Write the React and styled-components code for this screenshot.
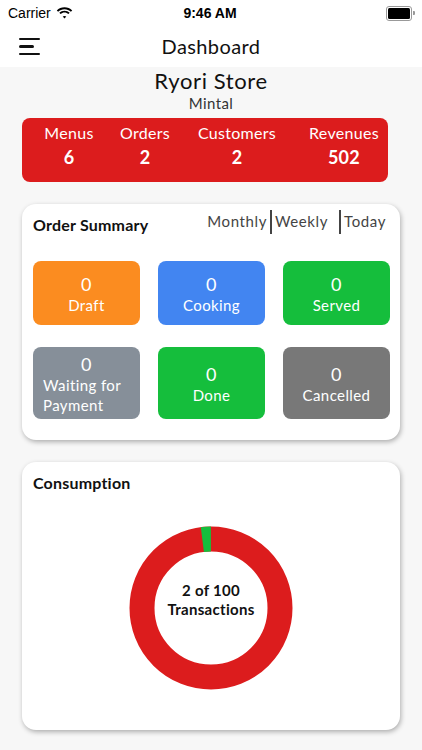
import React from 'react';
import styled, { createGlobalStyle } from 'styled-components';

const GlobalStyle = createGlobalStyle`
  body {
    margin: 0;
    background: #f7f7f7;
    font-family: 'Lato', 'Noto Sans', sans-serif;
    color: #111;
  }
`;

const Screen = styled.div`
  width: 422px;
  height: 750px;
  overflow: hidden;
  background: #f7f7f7;
`;

const TopArea = styled.div`
  background: #ffffff;
`;

const StatusBar = styled.div`
  height: 26px;
  padding: 0 10px 0 8px;
  display: grid;
  grid-template-columns: 1fr auto 1fr;
  align-items: center;
  font-family: 'Liberation Sans', sans-serif;
  font-size: 14px;
  color: #000;
`;

const Carrier = styled.div`
  display: flex;
  align-items: center;
  gap: 5px;
`;

const Time = styled.div`
  font-weight: 700;
  font-size: 14px;
`;

const Battery = styled.div`
  justify-self: end;
  width: 22px;
  height: 11px;
  border: 1px solid #999;
  border-radius: 3px;
  padding: 1px;
  position: relative;
  &::before {
    content: '';
    display: block;
    height: 100%;
    background: #000;
    border-radius: 1.5px;
  }
  &::after {
    content: '';
    position: absolute;
    right: -4px;
    top: 4px;
    width: 2px;
    height: 4px;
    background: #999;
    border-radius: 0 1px 1px 0;
  }
`;

const NavBar = styled.div`
  height: 41px;
  display: grid;
  grid-template-columns: 60px 1fr 60px;
  align-items: center;
`;

const MenuButton = styled.div`
  padding-left: 19px;
  width: 21px;
  display: flex;
  flex-direction: column;
  gap: 5px;
`;

const MenuLine = styled.span`
  display: block;
  width: ${(p) => p.$width}px;
  height: 2.5px;
  background: #111;
  border-radius: 2px;
`;

const NavTitle = styled.div`
  text-align: center;
  font-size: 20px;
  letter-spacing: 0.4px;
  margin-top: -2px;
`;

const Content = styled.div`
  padding: 2px 22px 0 22px;
`;

const StoreName = styled.div`
  text-align: center;
  font-size: 22px;
  line-height: 26px;
  letter-spacing: 0.6px;
  margin-top: -1px;
`;

const StoreArea = styled.div`
  text-align: center;
  font-size: 15px;
  line-height: 18px;
  color: #333;
  letter-spacing: 0.4px;
`;

const StatsCard = styled.div`
  margin-top: 6px;
  width: 366px;
  height: 64px;
  box-sizing: border-box;
  background: #dc1c1d;
  border-radius: 8px;
  display: grid;
  grid-template-columns: 94px 58px 126px 88px;
  padding-top: 4px;
  color: #fff;
`;

const Stat = styled.div`
  text-align: center;
  display: flex;
  flex-direction: column;
  gap: 2px;
  letter-spacing: 0.3px;
`;

const StatLabel = styled.div`
  font-size: 16px;
  line-height: 22px;
`;

const StatValue = styled.div`
  font-size: 18px;
  font-weight: 700;
  line-height: 22px;
`;

const Card = styled.div`
  margin-top: ${(p) => p.$top}px;
  width: 378px;
  height: ${(p) => p.$height}px;
  box-sizing: border-box;
  background: #fff;
  border-radius: 14px;
  box-shadow: 1px 2px 5px rgba(0, 0, 0, 0.3);
  padding: 9px 11px;
`;

const CardHeader = styled.div`
  display: flex;
  justify-content: space-between;
  align-items: flex-start;
`;

const CardTitle = styled.div`
  font-size: 16px;
  font-weight: 700;
  line-height: 18px;
  margin-top: 3px;
  letter-spacing: 0.2px;
`;

const Tabs = styled.div`
  display: flex;
  align-items: flex-start;
  margin-top: -3px;
`;

const Tab = styled.div`
  font-size: 15px;
  line-height: 18px;
  color: #444;
  letter-spacing: 0.6px;
  padding: 2px 3px 0;
  border-left: ${(p) => (p.$divided ? '2px solid #444' : 'none')};
  height: 24px;
  box-sizing: border-box;
  margin-left: ${(p) => p.$gap || 0}px;
`;

const TileGrid = styled.div`
  margin-top: 27px;
  display: grid;
  grid-template-columns: repeat(3, 107px);
  grid-template-rows: 64px 72px;
  column-gap: 18px;
  row-gap: 22px;
`;

const Tile = styled.div`
  background: ${(p) => p.$color};
  border-radius: 8px;
  color: #fff;
  display: flex;
  flex-direction: column;
  justify-content: center;
  align-items: ${(p) => (p.$left ? 'flex-start' : 'center')};
  padding: 2px 10px 0;
  font-size: 15px;
  line-height: 20px;
  letter-spacing: 0.4px;
`;

const TileCount = styled.div`
  font-size: 18px;
  line-height: 22px;
  align-self: center;
`;

const TileLabel = styled.div`
  text-align: ${(p) => (p.$left ? 'left' : 'center')};
`;

const ChartWrap = styled.div`
  display: flex;
  justify-content: center;
  margin-top: 34px;
`;

const Donut = styled.div`
  position: relative;
  width: 164px;
  height: 164px;
`;

const DonutLabel = styled.div`
  position: absolute;
  inset: 0 0 16px 0;
  display: flex;
  flex-direction: column;
  align-items: center;
  justify-content: center;
  font-size: 15px;
  font-weight: 700;
  line-height: 19px;
  letter-spacing: 0.3px;
`;

const tiles = [
  { count: 0, label: 'Draft', color: '#fb8c20' },
  { count: 0, label: 'Cooking', color: '#4285f1' },
  { count: 0, label: 'Served', color: '#15be3c' },
  { count: 0, label: 'Waiting for Payment', color: '#868f99', left: true },
  { count: 0, label: 'Done', color: '#15be3c' },
  { count: 0, label: 'Cancelled', color: '#787878' },
];

const stats = [
  { label: 'Menus', value: 6 },
  { label: 'Orders', value: 2 },
  { label: 'Customers', value: 2 },
  { label: 'Revenues', value: 502 },
];

function Wifi() {
  return (
    <svg width="17" height="12" viewBox="0 0 17 12">
      <path d="M8.5 2.2c2.5 0 4.7 1 6.4 2.6l1.3-1.4C14.2 1.5 11.5.3 8.5.3S2.8 1.5.8 3.4l1.3 1.4C3.8 3.2 6 2.2 8.5 2.2z" fill="#000" />
      <path d="M8.5 5.6c1.5 0 2.8.6 3.9 1.5l1.3-1.4C12.3 4.5 10.5 3.7 8.5 3.7S4.7 4.5 3.3 5.7l1.3 1.4c1.1-.9 2.4-1.5 3.9-1.5z" fill="#000" />
      <path d="M8.5 8.9c.7 0 1.3.3 1.8.7L8.5 11.6 6.7 9.6c.5-.4 1.1-.7 1.8-.7z" fill="#000" />
    </svg>
  );
}

function Ring({ used, total }) {
  const r = 69;
  const c = 2 * Math.PI * r;
  const part = (used / total) * c;
  return (
    <svg width="164" height="164" viewBox="0 0 164 164">
      <circle cx="82" cy="82" r={r} fill="none" stroke="#dc1c1d" strokeWidth="25" />
      <circle
        cx="82"
        cy="82"
        r={r}
        fill="none"
        stroke="#15be3c"
        strokeWidth="25"
        strokeDasharray={`${part} ${c - part}`}
        transform="rotate(-97.2 82 82)"
      />
    </svg>
  );
}

export default function App() {
  return (
    <Screen>
      <GlobalStyle />
      <TopArea>
        <StatusBar>
          <Carrier>
            Carrier <Wifi />
          </Carrier>
          <Time>9:46 AM</Time>
          <Battery />
        </StatusBar>
        <NavBar>
          <MenuButton>
            <MenuLine $width={21} />
            <MenuLine $width={15} />
            <MenuLine $width={21} />
          </MenuButton>
          <NavTitle>Dashboard</NavTitle>
          <div />
        </NavBar>
      </TopArea>
      <Content>
        <StoreName>Ryori Store</StoreName>
        <StoreArea>Mintal</StoreArea>
        <StatsCard>
          {stats.map((s) => (
            <Stat key={s.label}>
              <StatLabel>{s.label}</StatLabel>
              <StatValue>{s.value}</StatValue>
            </Stat>
          ))}
        </StatsCard>

        <Card $top={22} $height={236}>
          <CardHeader>
            <CardTitle>Order Summary</CardTitle>
            <Tabs>
              <Tab>Monthly</Tab>
              <Tab $divided>Weekly</Tab>
              <Tab $divided $gap={8}>Today</Tab>
            </Tabs>
          </CardHeader>
          <TileGrid>
            {tiles.map((t) => (
              <Tile key={t.label} $color={t.color} $left={t.left}>
                <TileCount>{t.count}</TileCount>
                <TileLabel $left={t.left}>{t.label}</TileLabel>
              </Tile>
            ))}
          </TileGrid>
        </Card>

        <Card $top={22} $height={268}>
          <CardTitle>Consumption</CardTitle>
          <ChartWrap>
            <Donut>
              <Ring used={2} total={100} />
              <DonutLabel>
                <div>2 of 100</div>
                <div>Transactions</div>
              </DonutLabel>
            </Donut>
          </ChartWrap>
        </Card>
      </Content>
    </Screen>
  );
}
